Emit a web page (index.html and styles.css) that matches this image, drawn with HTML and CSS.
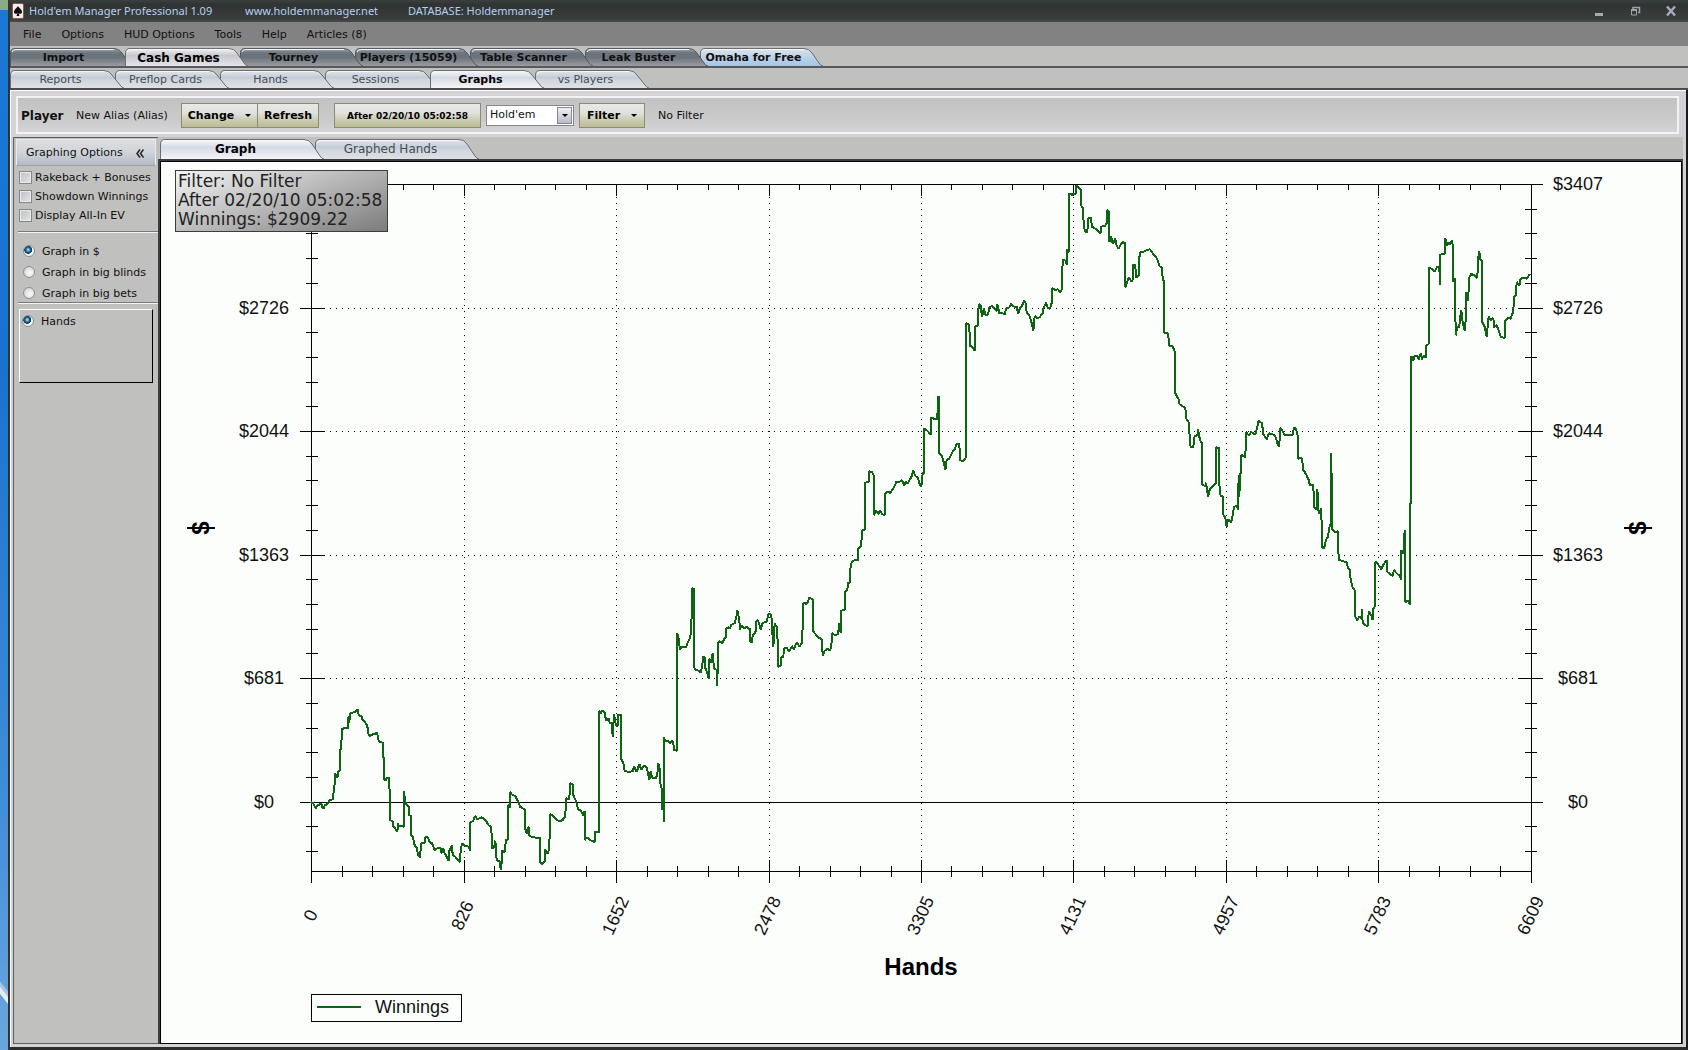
FILE: index.html
```html
<!DOCTYPE html>
<html lang="en">
<head>
<meta charset="utf-8">
<title>Hold'em Manager Professional</title>
<link rel="stylesheet" href="styles.css">
</head>
<body>
<svg class="defs" aria-hidden="true">
  <defs>
    <linearGradient id="g-dark" x1="0" y1="0" x2="0" y2="1"><stop offset="0" stop-color="#a4aab0"/><stop offset=".25" stop-color="#6c757e"/><stop offset=".5" stop-color="#6a727b"/><stop offset="1" stop-color="#9a9da2"/></linearGradient>
    <linearGradient id="g-sel" x1="0" y1="0" x2="0" y2="1"><stop offset="0" stop-color="#f4f4f6"/><stop offset=".4" stop-color="#c6c8ce"/><stop offset="1" stop-color="#e6e4ea"/></linearGradient>
    <linearGradient id="g-blue" x1="0" y1="0" x2="0" y2="1"><stop offset="0" stop-color="#dde6ea"/><stop offset=".5" stop-color="#bcd2e6"/><stop offset="1" stop-color="#a4c6e6"/></linearGradient>
    <linearGradient id="g-light" x1="0" y1="0" x2="0" y2="1"><stop offset="0" stop-color="#e4e6ea"/><stop offset=".4" stop-color="#c4ccd8"/><stop offset=".55" stop-color="#d0d6de"/><stop offset="1" stop-color="#dfe2e4"/></linearGradient>
    <linearGradient id="g-white" x1="0" y1="0" x2="0" y2="1"><stop offset="0" stop-color="#fafafa"/><stop offset=".4" stop-color="#d4dae6"/><stop offset="1" stop-color="#f6f4f6"/></linearGradient>
    <symbol id="tab-l" viewBox="0 0 123 18"><path d="M.5 18V5Q.5.5 5 .5H104Q109 .5 112 5L119 15Q121 18 123 18"/><path class="shine" d="M2 4Q3 1.500 6 1.500H104"/></symbol>
    <symbol id="tab-m" viewBox="0 0 114 18"><path d="M.5 18V5Q.5.5 5 .5H94Q99 .5 102 5L110 15Q112 18 114 18"/><path class="shine" d="M2 4Q3 1.500 6 1.500H94"/></symbol>
    <symbol id="tab-x" viewBox="0 0 164 20"><path d="M.5 20V5Q.5.5 5 .5H144Q149 .5 152 5L160 17Q162 20 164 20"/><path class="shine" d="M2 4Q3 1.500 6 1.500H144"/></symbol>
  </defs>
</svg>
<div class="window">
  <header class="titlebar">
    <svg class="app-icon" width="12" height="16" viewBox="0 0 12 16" aria-hidden="true"><rect x=".5" y=".5" width="11" height="15" rx="1.500" fill="#f2eeee" stroke="#8a5a50"/><path d="M6 3C5 5 2 6.500 2 9c0 2 2.500 2.500 3.500 1L4.500 13h3L6.500 10c1 1.500 3.500 1 3.500-1C10 6.500 7 5 6 3z" fill="#111"/></svg>
    <span class="t-name">Hold'em Manager Professional 1.09</span>
    <span class="t-site">www.holdemmanager.net</span>
    <span class="t-db">DATABASE: Holdemmanager</span>
    <div class="controls">
      <button aria-label="Minimize"><svg width="12" height="12" viewBox="0 0 12 12"><rect x="2" y="8" width="8" height="3" fill="#a4acb0"/></svg></button>
      <button aria-label="Restore"><svg width="12" height="12" viewBox="0 0 12 12"><path d="M4 4V2.500h6.500v5H9" fill="none" stroke="#9aa2a8" stroke-width="1.500"/><path d="M2.500 5h5v5h-5z" fill="none" stroke="#9aa2a8"/><path d="M2 5h6" stroke="#9aa2a8" stroke-width="2"/></svg></button>
      <button aria-label="Close"><svg width="12" height="12" viewBox="0 0 12 12"><path d="M2 1.500l8 9M10 1.500l-8 9" stroke="#a4acbc" stroke-width="2.500"/></svg></button>
    </div>
  </header>
  <nav class="menu">
    <button>File</button><button>Options</button><button>HUD Options</button><button>Tools</button><button>Help</button><button>Articles (8)</button>
  </nav>
  <nav class="tabs tabs-l">
    <button class="dark"><svg><use href="#tab-l"/></svg><span>Import</span></button>
    <button class="sel"><svg><use href="#tab-l"/></svg><span>Cash Games</span></button>
    <button class="dark"><svg><use href="#tab-l"/></svg><span>Tourney</span></button>
    <button class="dark"><svg><use href="#tab-l"/></svg><span>Players (15059)</span></button>
    <button class="dark"><svg><use href="#tab-l"/></svg><span>Table Scanner</span></button>
    <button class="dark"><svg><use href="#tab-l"/></svg><span>Leak Buster</span></button>
    <button class="blue"><svg><use href="#tab-l"/></svg><span>Omaha for Free</span></button>
  </nav>
  <nav class="tabs tabs-m">
    <button><svg><use href="#tab-m"/></svg><span>Reports</span></button>
    <button><svg><use href="#tab-m"/></svg><span>Preflop Cards</span></button>
    <button><svg><use href="#tab-m"/></svg><span>Hands</span></button>
    <button><svg><use href="#tab-m"/></svg><span>Sessions</span></button>
    <button class="sel white"><svg><use href="#tab-m"/></svg><span>Graphs</span></button>
    <button><svg><use href="#tab-m"/></svg><span>vs Players</span></button>
  </nav>
  <div class="client">
    <div class="toolbar">
      <strong>Player</strong>
      <span class="alias">New Alias (Alias)</span>
      <div class="pair"><button class="btn change">Change <i class="arrow"></i></button><button class="btn refresh">Refresh</button></div>
      <button class="btn date">After 02/20/10 05:02:58</button>
      <span class="combo"><select aria-label="Game"><option>Hold'em</option></select><i class="drop"><i class="arrow"></i></i></span>
      <button class="btn filter">Filter <i class="arrow"></i></button>
      <span class="nofilter">No Filter</span>
    </div>
    <div class="body">
      <aside class="side">
        <div class="side-head"><span>Graphing Options</span><button aria-label="Collapse"><svg width="8" height="9" viewBox="0 0 8 9"><path d="M4 .5L1 4.500l3 4M7.500 .5l-3 4 3 4" fill="none" stroke="#222" stroke-width="1.500"/></svg></button></div>
        <div class="checks">
          <label><input type="checkbox"><span>Rakeback + Bonuses</span></label>
          <label><input type="checkbox"><span>Showdown Winnings</span></label>
          <label><input type="checkbox"><span>Display All-In EV</span></label>
        </div>
        <div class="radios">
          <label><input type="radio" name="unit" checked><span>Graph in $</span></label>
          <label><input type="radio" name="unit"><span>Graph in big blinds</span></label>
          <label><input type="radio" name="unit"><span>Graph in big bets</span></label>
        </div>
        <div class="axisbox"><label><input type="radio" name="axis" checked><span>Hands</span></label></div>
      </aside>
      <main class="main">
        <nav class="tabs tabs-x">
          <button class="sel white"><svg><use href="#tab-x"/></svg><span>Graph</span></button>
          <button><svg><use href="#tab-x"/></svg><span>Graphed Hands</span></button>
        </nav>
        <div class="panel">
          <svg class="chart" viewBox="161 162 1520 881" role="img" aria-label="Winnings by hands played">
            <g class="grid">
              <path d="M324 308.500H1520M324 431.500H1520M324 555.500H1520M324 678.500H1520"/>
              <path d="M464.500 197V860M616.500 197V860M769.500 197V860M921.500 197V860M1073.500 197V860M1226.500 197V860M1378.500 197V860"/>
            </g>
            <g class="axis">
              <path d="M300 184.500H1543M311.500 184V883M1531.500 184V883M311 871.500H1532M300 802.500H1543"/>
              <path d="M300 308.500h24M300 431.500h24M300 555.500h24M300 678.500h24M1519 308.500h24M1519 431.500h24M1519 555.500h24M1519 678.500h24"/>
              <path d="M464.500 184v12M616.500 184v12M769.500 184v12M921.500 184v12M1073.500 184v12M1226.500 184v12M1378.500 184v12M464.500 860v23M616.500 860v23M769.500 860v23M921.500 860v23M1073.500 860v23M1226.500 860v23M1378.500 860v23"/>
              <path d="M342.500 866v11M372.500 866v11M403.500 866v11M433.500 866v11M494.500 866v11M525.500 866v11M555.500 866v11M586.500 866v11M647.500 866v11M677.500 866v11M708.500 866v11M738.500 866v11M799.500 866v11M830.500 866v11M860.500 866v11M891.500 866v11M951.500 866v11M982.500 866v11M1012.500 866v11M1043.500 866v11M1104.500 866v11M1134.500 866v11M1165.500 866v11M1195.500 866v11M1256.500 866v11M1287.500 866v11M1317.500 866v11M1348.500 866v11M1409.500 866v11M1439.500 866v11M1470.500 866v11M1500.500 866v11"/>
              <path d="M403.500 184v6M433.500 184v6M494.500 184v6M525.500 184v6M555.500 184v6M586.500 184v6M647.500 184v6M677.500 184v6M708.500 184v6M738.500 184v6M799.500 184v6M830.500 184v6M860.500 184v6M891.500 184v6M951.500 184v6M982.500 184v6M1012.500 184v6M1043.500 184v6M1104.500 184v6M1134.500 184v6M1165.500 184v6M1195.500 184v6M1256.500 184v6M1287.500 184v6M1317.500 184v6M1348.500 184v6M1409.500 184v6M1439.500 184v6M1470.500 184v6M1500.500 184v6"/>
              <path id="minor-y" d="M306 209.500h12M306 233.500h12M306 258.500h12M306 283.500h12M306 332.500h12M306 357.500h12M306 382.500h12M306 406.500h12M306 456.500h12M306 480.500h12M306 505.500h12M306 530.500h12M306 579.500h12M306 604.500h12M306 629.500h12M306 653.500h12M306 703.500h12M306 728.500h12M306 752.500h12M306 777.500h12M306 826.500h12M306 851.500h12"/>
              <use href="#minor-y" x="1219"/>
            </g>
            <g class="series">
              <polyline transform="translate(290 680) scale(.33333)" points="64,367 70,370 74,380 78,386 80,378 88,374 94,370 96,380 102,386 104,376 110,374 116,366 118,360 128,358 130,345 134,312 136,280 138,292 144,290 144,274 150,272 150,210 154,206 154,180 156,178 156,146 174,144 174,110 178,128 180,100 188,98 198,94 204,88 206,106 214,108 218,120 226,128 232,136 234,160 240,168 246,164 252,162 258,160 262,160 264,178 270,186 278,188 280,232 283,234 283,300 288,300 290,292 298,294 300,420 308,424 310,440 316,446 322,456 324,430 326,438 342,440 342,332 345,365 350,374 356,380 357,405 363,408 363,465 369,470 372,492 380,504 384,525 390,533 392,508 394,490 404,488 406,472 414,472 418,486 426,490 434,510 444,504 452,504 454,520 460,504 464,520 470,530 476,543 478,512 486,496 488,524 496,530 500,536 510,546 512,512 516,490 524,498 538,500 539,514 540,428 550,422 555,408 562,418 574,412 584,418 590,426 596,436 604,442 606,505 612,502 616,482 620,540 630,545 632,570 636,540 636,512 644,516 648,480 654,478 654,374 660,384 660,336 666,344 676,348 680,356 686,368 690,380 704,388 704,440 710,460 716,440 718,468 730,472 746,474 750,474 750,546 756,552 764,545 766,508 772,522 778,506 780,402 788,406 798,418 808,424 818,420 826,408 828,354 838,358 840,310 848,312 850,345 858,364 864,388 872,392 880,406 884,392 884,480 890,472 896,476 904,482 914,486 914,454 926,458 928,92 932,100 936,92 944,96 948,122 956,116 960,130 966,130 968,172 972,102 978,136 984,138 984,104 992,104 994,238 1000,250 1004,272 1014,276 1028,274 1032,260 1040,276 1048,252 1054,270 1062,256 1070,262 1078,300 1082,274 1086,292 1096,296 1102,286 1104,250 1108,256 1112,320 1116,326 1116,388 1122,388 1122,426 1122,172 1126,184 1136,184 1140,192 1146,180 1150,188 1152,210 1162,212 1162,0"/>
              <polyline transform="translate(640 420) scale(.33333)" points="112,840 112,640 116,655 120,690 124,680 138,682 144,665 150,655 154,632 156,504 161,506 162,742 168,750 176,752 182,758 186,740 190,710 196,716 196,745 202,758 206,776 208,716 214,728 218,700 222,745 230,750 232,798 234,668 240,664 246,670 252,658 258,650 258,628 264,622 270,626 274,614 284,610 288,596 292,572 298,600 300,630 304,616 312,626 318,620 330,628 330,662 336,668 338,645 346,640 350,600 356,606 362,630 368,608 380,606 386,580 394,584 396,622 400,680 404,610 412,624 414,740 422,736 424,712 430,710 432,686 440,684 448,694 456,678 462,688 466,676 472,668 478,680 486,668 488,620 490,548 500,552 504,545 508,532 516,538 520,540 520,635 528,644 534,652 546,658 548,706 554,692 562,686 570,692 574,680 576,640 586,646 594,642 598,610 602,640 604,572 614,570 614,515 622,510 624,490 630,486 632,432 640,422 654,420 654,388 662,378 664,372 666,332 674,330 676,188 686,186 688,154 696,156 702,168 702,286 708,272 716,282 720,270 726,282 734,286 736,220 746,214 750,222 756,210 762,202 770,184 778,186 786,180 792,196 798,184 802,192 810,178 816,166 820,152 826,168 834,174 838,190 844,200 848,160 852,158"/>
              <polyline transform="translate(900 170) scale(.33333)" points="72,908 72,776 82,782 92,794 94,742 104,748 112,748 114,680 118,680 118,850 126,858 130,872 136,900 140,870 148,866 156,848 164,838 170,820 178,822 180,870 188,874 196,866 198,860 198,460 206,462 208,470 210,528 216,530 224,542 226,470 234,466 236,402 242,406 246,440 252,416 256,434 264,434 268,412 276,408 282,414 290,424 292,402 298,430 306,428 314,434 318,416 328,412 334,402 342,410 350,410 354,432 360,414 366,408 372,392 376,396 380,428 388,436 394,455 400,482 404,438 412,446 420,440 428,430 430,416 438,398 444,414 450,416 456,396 456,354 466,360 474,358 480,366 486,358 488,268 496,272 500,284 502,238 508,246 508,70 516,74 528,70 528,46 536,52 542,58 544,108 548,112 550,145 554,182 562,188 564,146 572,142 576,170 586,176 594,182 602,190 604,170 614,168 620,160 620,120 626,124 628,216 634,200 638,222 646,206 650,228 656,236 662,224 668,216 676,220 676,352 682,336 686,322 694,334 698,330 698,286 706,286 708,322 716,318 718,262 722,244 730,246 740,240 750,238 758,250 768,262 774,272 778,288 786,294 788,324 792,335 792,488 804,490 808,528 818,528 824,545 826,670 836,688 838,702 850,710 856,714 860,750 866,756 868,786 872,832 880,830 884,798 892,796 894,778 900,810 906,820"/>
              <polyline transform="translate(1150 390) scale(.33333)" points="156,158 156,284 166,288 168,278 174,320 180,296 188,290 198,280 198,172 208,174 208,282 212,320 218,318 220,375 226,382 230,410 234,388 244,396 246,388 252,352 260,346 264,360 266,256 268,322 270,252 274,246 274,194 286,202 288,126 296,136 304,126 316,134 320,118 326,92 336,100 340,132 350,148 356,130 366,132 376,138 382,160 388,170 390,114 396,120 404,136 416,136 428,134 432,112 438,118 444,140 444,206 456,204 460,240 468,252 476,270 480,286 490,286 492,352 500,360 502,296 506,370 514,356 516,472 522,476 528,450 534,440 538,412 542,402 544,190 546,418 556,426 564,424 566,510 576,512 590,518 594,534 600,540 602,570 608,592 614,600 616,680 622,690 628,680 634,686 636,658 638,698 646,706 654,708 656,664 664,676 668,690 670,656 674,650 676,515 684,522 694,538 700,524 710,510 712,546 722,554 728,558 732,540 740,550 750,558 754,570 754,480 760,492 764,420 766,636 774,632 780,644 780,340 784,340 784,0"/>
              <polyline transform="translate(1380 210) scale(.33333)" points="94,600 94,438 100,452 104,438 112,436 116,448 122,430 126,448 130,438 138,442 138,408 146,402 148,172 156,178 164,184 172,170 178,172 180,226 180,134 194,132 196,84 200,108 206,96 210,104 216,92 220,120 220,216 225,205 227,376 232,352 238,350 240,325 244,300 248,336 254,362 258,320 258,246 264,272 268,202 274,192 282,196 292,204 294,148 298,124 300,146 306,152 306,334 314,350 320,380 326,320 332,330 340,324 342,352 350,345 356,362 362,380 374,384 376,332 384,324 392,326 400,304 402,260 408,254 410,216 418,226 422,206 430,204 440,206 448,194"/>
            </g>
            <g class="num">
              <text x="264" y="314">$2726</text><text x="264" y="437">$2044</text><text x="264" y="561">$1363</text><text x="264" y="684">$681</text><text x="264" y="808">$0</text>
              <text x="1578" y="190">$3407</text><text x="1578" y="314">$2726</text><text x="1578" y="437">$2044</text><text x="1578" y="561">$1363</text><text x="1578" y="684">$681</text><text x="1578" y="808">$0</text>
              <text transform="translate(316 918) rotate(-65)">0</text>
              <text transform="translate(468 918) rotate(-65)">826</text>
              <text transform="translate(621 918) rotate(-65)">1652</text>
              <text transform="translate(773 918) rotate(-65)">2478</text>
              <text transform="translate(926 918) rotate(-65)">3305</text>
              <text transform="translate(1078 918) rotate(-65)">4131</text>
              <text transform="translate(1231 918) rotate(-65)">4957</text>
              <text transform="translate(1383 918) rotate(-65)">5783</text>
              <text transform="translate(1536 918) rotate(-65)">6609</text>
            </g>
            <g class="axis-title">
              <text x="921" y="975">Hands</text>
              <text transform="translate(209 528) rotate(-90)">$</text>
              <text transform="translate(1646 528) rotate(-90)">$</text>
              <path d="M187 528H215M1624 528H1652"/>
            </g>
            <g class="legend">
              <rect x="311.500" y="994.500" width="150" height="27"/>
              <path d="M317 1007H361"/>
              <text x="375" y="1013">Winnings</text>
            </g>
          </svg>
          <div class="info">Filter: No Filter<br>After 02/20/10 05:02:58<br>Winnings: $2909.22</div>
        </div>
      </main>
    </div>
  </div>
</div>
</body>
</html>
```
FILE: styles.css
```css
* { box-sizing: border-box; }
body {
  margin: 0;
  min-height: 100vh;
  display: flex;
  padding-left: 8px;
  background:
    linear-gradient(#8bab86 0 10px, transparent 10px) 0 0 / 8px 10px no-repeat,
    linear-gradient(52deg, transparent 0 40%, #e4ecf4 42% 52%, #a8c4e0 56% 62%, transparent 66%) 0 972px / 8px 44px no-repeat,
    linear-gradient(#1b78d6 0, #1873cf 35%, #3f8cd8 75%, #6aa6dc 100%);
  font: 11px/14px "DejaVu Sans", Verdana, sans-serif;
  color: #111;
}
.defs { position: absolute; width: 0; height: 0; }
button, select { font: inherit; color: inherit; margin: 0; padding: 0; border: 0; background: none; }

.window { flex: 1; min-width: 0; display: flex; flex-direction: column; background: #c0c0be; border-left: 2px solid #333; }

.titlebar {
  display: flex; align-items: center;
  height: 22px; padding: 0 6px 0 2px;
  background: linear-gradient(#3a4040, #313333 20%, #3a3d3d 85%, #4a4a4a);
  color: #b4d0f0;
  font: 11px/16px "Noto Sans", sans-serif;
}
.app-icon { margin-right: 5px; }
.t-name { width: 216px; }
.t-site { width: 163px; }
.controls { margin-left: auto; display: flex; gap: 24px; padding-right: 5px; }
.controls button { width: 12px; height: 12px; display: flex; }

.menu { display: flex; gap: 20px; height: 24px; padding: 1px 13px 0; background: #828282; align-items: center; }

.tabs { display: flex; position: relative; isolation: isolate; }
.tabs button { position: relative; flex: none; display: flex; justify-content: center; align-items: center; color: #444c54; z-index: 1; padding-top: 1px; }
.tabs svg { position: absolute; left: 0; top: 0; z-index: -1; fill: url(#g-light); stroke: #6a6c70; }
.shine { fill: none; stroke: #f6f8fa; }
.tabs button:nth-child(1) { z-index: 7; }
.tabs button:nth-child(2) { z-index: 6; }
.tabs button:nth-child(3) { z-index: 5; }
.tabs button:nth-child(4) { z-index: 4; }
.tabs button:nth-child(5) { z-index: 3; }
.tabs button:nth-child(6) { z-index: 2; }
.tabs button.sel { z-index: 8; color: #000; font-weight: bold; }
.tabs-l { padding-top: 2px; height: 22px; border-bottom: 2px solid #58585a; }
.tabs-l button { width: 115px; height: 18px; font-weight: bold; color: #111; padding-right: 8px; }
.tabs-l svg { width: 123px; height: 18px; }
.tabs-l .sel { font-size: 12px; }
.tabs-l .dark svg { fill: url(#g-dark); stroke: #55595e; }
.tabs-l .dark .shine { stroke: #a8aeb4; }
.tabs .sel svg { fill: url(#g-sel); }
.tabs .blue svg { fill: url(#g-blue); }
.tabs-m { padding-top: 2px; height: 22px; border-bottom: 2px solid #4c4c4e; }
.tabs-m button { width: 105px; height: 18px; padding-right: 4px; }
.tabs-m svg { width: 114px; height: 18px; }
.tabs-x { height: 22px; padding: 2px 0 0 2px; }
.tabs-x button { width: 155px; height: 20px; font-size: 12px; padding: 0 4px 1px 0; }
.tabs-x svg { width: 164px; height: 20px; }
.tabs .white svg { fill: url(#g-white); }

.client {
  flex: 1; display: flex; flex-direction: column;
  border-right: 2px solid #1c1c1c; border-bottom: 3px solid #2c2e2e;
  background: #d4d2d6;
  box-shadow: inset 1px 1px #fff;
  padding: 1px 3px 3px;
}
.toolbar {
  display: flex; align-items: center;
  height: 38px; margin: 5px 4px 3px 3px; padding-left: 3px;
  border: 2px solid #f4f2f4;
  background: linear-gradient(#c2c2c2, #cacaca 60%, #d4d4d8);
}
.toolbar strong { font-size: 12px; width: 55px; padding-top: 1px; }
.alias { width: 105px; padding-top: 1px; }
.pair { display: flex; margin-right: 15px; }
.btn {
  height: 25px; padding-top: 1px; border: 1px solid #8c8c70; font-weight: bold; color: #000;
  background: linear-gradient(#e8e8e8, #e0e0dc 40%, #c8c8ac 75%, #bcbc98);
  display: flex; align-items: center; justify-content: center; gap: 11px;
}
.arrow { width: 0; height: 0; border: 3px solid transparent; border-top-color: #000; border-bottom: 0; }
.change { width: 77px; }
.refresh { width: 61px; border-left: 0; }
.date { width: 147px; font-size: 9px; margin-right: 5px; }
.combo { position: relative; display: flex; width: 88px; margin-right: 5px; }
.combo select { appearance: none; width: 100%; height: 21px; background: #fff; border: 1px solid #85878c; padding-left: 3px; border-radius: 0; font-size: 11px; }
.drop { position: absolute; right: 2px; top: 2px; width: 15px; height: 17px; border: 1px solid #858890; background: linear-gradient(#eef0f4, #b8bcc8); display: flex; align-items: center; justify-content: center; pointer-events: none; }
.filter { width: 66px; margin-right: 13px; }
.nofilter { padding-top: 1px; }

.body { flex: 1; display: flex; background: #c0c0be; }
.side { width: 145px; flex: none; border: solid #5c5e66; border-width: 1px 0 1px 1px; padding: 1px 0 0 2px; }
.side-head {
  display: flex; align-items: center; justify-content: space-between;
  height: 27px; margin-right: 2px; padding: 1px 11px 0 9px;
  border: 1px solid #e8eaee; border-bottom-color: #9ca4b4;
  background: linear-gradient(#dcdee0, #d0d3d8 50%, #b4bac6);
}
.side-head button { display: flex; }
.side label { display: flex; align-items: center; height: 14px; white-space: nowrap; }
.side label span { padding-top: 2px; }
.checks { display: flex; flex-direction: column; gap: 5px; margin-left: 2px; padding: 4px 0 9px 1px; border-bottom: 1px solid #7a7a7c; box-shadow: 0 1px #f4f4f4; }
.checks input { appearance: none; width: 13px; height: 13px; margin: 0 3px 0 0; border: 1px solid #848688; background: linear-gradient(135deg, #bcc0c4, #e4e6e8); box-shadow: inset 0 0 0 1px #e8eaec; }
.radios { display: flex; flex-direction: column; gap: 7px; margin-left: 2px; padding: 12px 0 2px 5px; border-bottom: 1px solid #7a7a7c; box-shadow: 0 1px #f4f4f4; }
.side input[type="radio"] {
  appearance: none; width: 12px; height: 12px; margin: 0 7px 0 0; border-radius: 50%;
  border: 1px solid #8c9094; background: radial-gradient(circle at 60% 60%, #f4f4f4 20%, #c4c6c8);
}
.side input[type="radio"]:checked { background: radial-gradient(circle at 42% 38%, #9cd8f4 0 6%, #1c5f8c 28%, #123c5c 44%, #f0f2f4 50%); }
.axisbox { height: 74px; margin: 6px 5px 0 3px; padding: 4px 2px; border: 1px solid #000; border-top-color: #fff; border-left-color: #fff; }

.main { flex: 1; min-width: 0; display: flex; flex-direction: column; }
.panel {
  flex: 1; position: relative; display: flex;
  border: solid #3c3e42; border-width: 2px 1px 0 2px;
  background: #fcfefc;
  box-shadow: inset 0 0 0 1px #000;
  padding: 1px;
}
.chart { width: 100%; height: 100%; }
.grid path { stroke: #000; stroke-dasharray: 1 5; fill: none; shape-rendering: crispEdges; }
.axis path { stroke: #000; fill: none; shape-rendering: crispEdges; }
.series polyline { fill: none; stroke: #0f6414; stroke-width: 6px; shape-rendering: crispEdges; stroke-linejoin: bevel; stroke-linecap: square; }
.num text { font: 18px "Liberation Sans", Arial, sans-serif; text-anchor: middle; fill: #111; }
.axis-title text { font: bold 24px "Liberation Sans", Arial, sans-serif; text-anchor: middle; }
.axis-title path { stroke: #000; stroke-width: 2px; }
.legend rect { fill: none; stroke: #000; }
.legend path { stroke: #0f6414; stroke-width: 2px; }
.legend text { font: 18px "Liberation Sans", Arial, sans-serif; fill: #111; }
.info {
  position: absolute; left: 15px; top: 9px;
  padding: 1px 5px 2px 2px; border: 1px solid #3c3c3c;
  background: linear-gradient(160deg, #f4f4f4, #b8b8b8 50%, #7c7c7c);
  font-size: 17px; line-height: 19px; white-space: nowrap; color: #222;
}
```
